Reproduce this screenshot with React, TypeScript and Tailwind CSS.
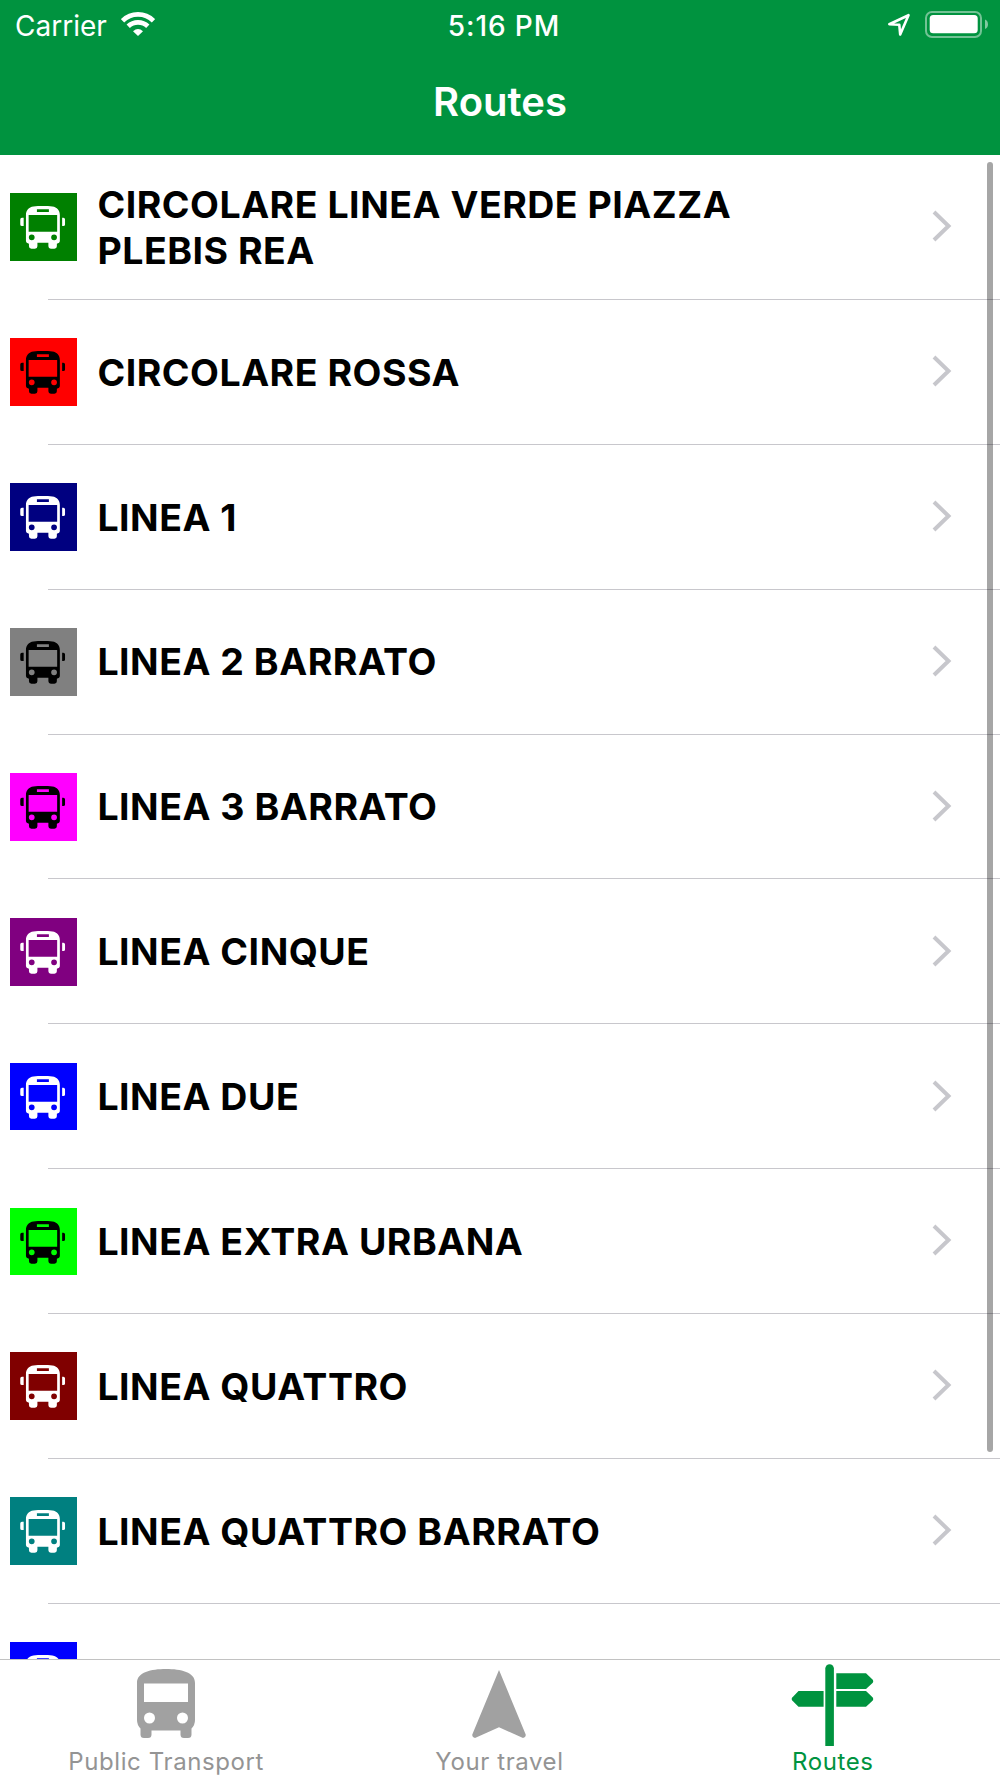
import React from 'react';
import clsx from 'clsx';

interface Route {
  name: string;
  bg: string;
  icon: string;
}

const routes: Route[] = [
  { name: 'CIRCOLARE LINEA VERDE PIAZZA PLEBIS REA', bg: 'bg-[#008000]', icon: 'text-white' },
  { name: 'CIRCOLARE ROSSA', bg: 'bg-[#ff0000]', icon: 'text-black' },
  { name: 'LINEA 1', bg: 'bg-[#000080]', icon: 'text-white' },
  { name: 'LINEA 2 BARRATO', bg: 'bg-[#808080]', icon: 'text-black' },
  { name: 'LINEA 3 BARRATO', bg: 'bg-[#ff00ff]', icon: 'text-black' },
  { name: 'LINEA CINQUE', bg: 'bg-[#800080]', icon: 'text-white' },
  { name: 'LINEA DUE', bg: 'bg-[#0000ff]', icon: 'text-white' },
  { name: 'LINEA EXTRA URBANA', bg: 'bg-[#00ff00]', icon: 'text-black' },
  { name: 'LINEA QUATTRO', bg: 'bg-[#800000]', icon: 'text-white' },
  { name: 'LINEA QUATTRO BARRATO', bg: 'bg-[#008080]', icon: 'text-white' },
  { name: '', bg: 'bg-[#0000ff]', icon: 'text-white' },
];

const BusIcon: React.FC = () => (
  <svg viewBox="0 0 68 68" className="block w-full h-full" fill="currentColor">
    <path
      fillRule="evenodd"
      d="M23.5 13.5C29 12.9 37 12.9 42.500 13.500C47.200 14 50 17.500 50 22V48.500Q50 50.500 47 51V53.500Q47 56 44.500 56H41Q38.500 56 38.500 53.500V50H27.500V53.500Q27.500 56 25 56H21.500Q19 56 19 53.500V51Q16 50.500 16 48.500V22C16 17.500 18.800 14 23.500 13.500ZM27 16.200V19H39V16.200ZM18.700 22V38.800H47.300V22ZM21.800 41.500A2.900 2.900 0 1 0 21.800 47.300A2.900 2.900 0 1 0 21.800 41.500ZM44.200 41.500A2.900 2.900 0 1 0 44.200 47.300A2.900 2.900 0 1 0 44.200 41.500Z"
    />
    <path d="M13.700 24.800V33.200H12Q10.300 33.200 10.300 31.500V26.500Q10.300 24.800 12 24.800ZM52.300 24.800V33.200H53.500Q55.200 33.200 55.200 31.500V26.500Q55.200 24.800 53.500 24.800Z" />
  </svg>
);

const StatusBar: React.FC = () => (
  <div className="grid grid-cols-3 h-[50px] items-center">
    <div className="flex items-center pl-[15px]">
      <span className="text-[28px] leading-none pt-0.5">Carrier</span>
      <svg viewBox="0 0 34 24" className="w-[34px] h-6 ml-[14px] -mt-0.5" fill="none" stroke="currentColor">
        <path d="M1.500 8.800A22 22 0 0 1 32.500 8.800" strokeWidth="4.800" />
        <path d="M7.200 14.300A14.300 14.300 0 0 1 26.800 14.300" strokeWidth="4.800" />
        <path d="M17 24L12 19.200Q17 14.800 22 19.200Z" fill="currentColor" stroke="none" />
      </svg>
    </div>
    <div className="text-center text-[28px] font-medium tracking-[0.9px] leading-none pt-0.5 pl-[8px]">5:16 PM</div>
    <div className="flex items-center justify-end pr-3">
      <svg viewBox="0 0 24 24" className="w-6 h-6 mr-[14px]" fill="none" stroke="currentColor" strokeWidth="2.600" strokeLinejoin="round">
        <path d="M21.500 2.200L13.200 21.500L12.300 11.800L2.300 11.200Z" />
      </svg>
      <svg viewBox="0 0 63 27" className="w-[63px] h-[27px] -mt-0.5" fill="currentColor">
        <rect x="1" y="1" width="55" height="25" rx="6" fill="none" stroke="currentColor" strokeWidth="2" opacity=".45" />
        <rect x="4.700" y="4" width="48" height="18.200" rx="3.500" />
        <path d="M60 8.500Q63 9.800 63 13.300T60 18Z" opacity=".5" />
      </svg>
    </div>
  </div>
);

const RouteRow: React.FC<{ route: Route }> = ({ route }) => (
  <li className="h-[144.900px] shrink-0 flex flex-col">
    <div className="flex-1 flex items-center pt-[0.600px] pl-[9.600px] pr-[48px]">
      <div className={clsx('w-[67.800px] h-[67.800px] shrink-0', route.bg, route.icon)}>
        <BusIcon />
      </div>
      <div className="ml-5 pt-px w-[700px] text-[37.500px] leading-[46px] tracking-[0.500px] font-bold text-black">{route.name}</div>
      <svg viewBox="0 0 20 32" className="w-5 h-8 ml-auto -mt-0.5" fill="none" stroke="#c7c7cc" strokeWidth="4">
        <path d="M2 2L16.500 16L2 30" />
      </svg>
    </div>
    <div className="ml-12 h-px shrink-0 bg-[#c8c7cc]" />
  </li>
);

interface TabProps {
  label: string;
  active?: boolean;
  children: React.ReactNode;
}

const Tab: React.FC<TabProps> = ({ label, active, children }) => (
  <div className={clsx('flex-1 flex flex-col items-center', active ? 'text-[#00933f]' : 'text-[#a1a1a1]')}>
    <div className="h-[88px] w-full flex justify-center pr-0.5">{children}</div>
    <div className={clsx('text-[24px] leading-[28px] tracking-[0.6px] pr-px', !active && 'text-[#949494]')}>{label}</div>
  </div>
);

export default function App() {
  return (
    <div className="relative w-[1000px] h-[1778px] flex flex-col overflow-hidden bg-white font-['Inter',sans-serif]">
      <header className="h-[155px] shrink-0 bg-[#00933f] text-white">
        <StatusBar />
        <h1 className="text-center text-[40px] leading-[104px] h-[105px] font-semibold">Routes</h1>
      </header>

      <ul className="h-[1504px] shrink-0 flex flex-col overflow-hidden">
        {routes.map((route, i) => (
          <RouteRow key={i} route={route} />
        ))}
      </ul>

      {/* Scroll indicator */}
      <div className="absolute left-[987px] top-[162px] w-[6px] h-[1290px] rounded-full bg-black/35" />

      <nav className="flex-1 flex border-t border-[#c2c2c2] bg-white">
        <Tab label="Public Transport">
          <svg viewBox="0 0 58 70" className="w-[58px] h-[70px] mt-[9px]" fill="currentColor">
            <path
              fillRule="evenodd"
              d="M0 14C0 3 14 0 29 0S58 3 58 14V51Q58 56 54.500 59.500V65.500Q54.500 69 51 69H47Q43.500 69 43.500 65.500V61.500H14.500V65.500Q14.500 69 11 69H7Q3.500 69 3.500 65.500V59.500Q0 56 0 51ZM7 14.500V33H51V14.500ZM12.500 43.500A5.500 5.500 0 1 0 12.500 54.500A5.500 5.500 0 1 0 12.500 43.500ZM45.500 43.500A5.500 5.500 0 1 0 45.500 54.500A5.500 5.500 0 1 0 45.500 43.500Z"
            />
          </svg>
        </Tab>
        <Tab label="Your travel">
          <svg viewBox="0 0 54 68" className="w-[54px] h-[68px] mt-[10px]" fill="currentColor">
            <path d="M27 0L53.700 64.500Q54.200 67.500 51 68L27 57.300L3 68Q-0.200 67.500 0.300 64.500Z" />
          </svg>
        </Tab>
        <Tab label="Routes" active>
          <svg viewBox="0 0 83 82" className="w-[83px] h-[82px] mt-[4px]" fill="currentColor">
            <path d="M34.300 82V4.500A4.300 4.300 0 0 1 42.900 4.500V82Z" />
            <path d="M45.300 9.300H75L81 15Q83.500 17.200 81 19.500L75 25H45.300ZM45.300 27H75L81 32.700Q83.500 34.900 81 37.200L75 42.700H45.300ZM32.600 27V42.700H7.500L2 37.200Q-0.700 34.900 2 32.700L7.500 27Z" />
          </svg>
        </Tab>
      </nav>
    </div>
  );
}
